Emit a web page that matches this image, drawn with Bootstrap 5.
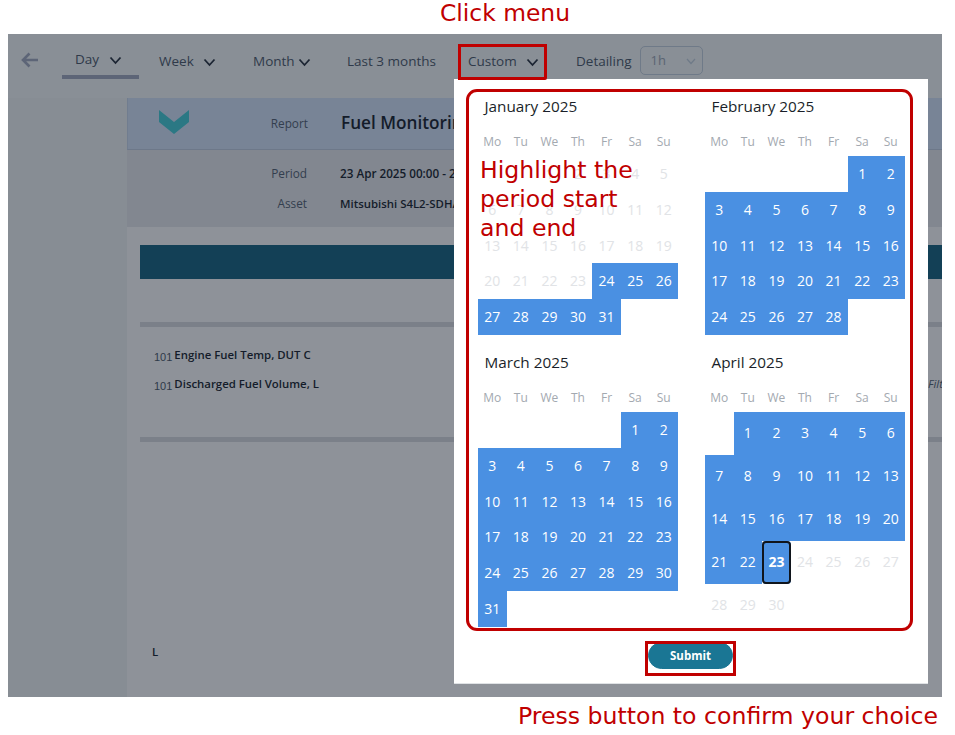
<!DOCTYPE html>
<html lang="en">
  <head>
    <meta charset="UTF-8" />
    <meta name="viewport" content="width=device-width, initial-scale=1.0" />
    <title>Custom period</title>
    <link href="https://cdn.jsdelivr.net/npm/bootstrap@5.3.0/dist/css/bootstrap.min.css" rel="stylesheet" />
    <style>
      body {
        font-family: "Open Sans", "Noto Sans", sans-serif;
        background: #fff;
        color: #1c2533;
        height: 735px;
        overflow: hidden;
      }
      .note {
        font-family: "DejaVu Sans", sans-serif;
        color: #c00000;
        line-height: 1;
      }
      .note-top { font-size: 23.4px; height: 34px; padding-top: 2px; text-align: center; padding-left: 55px; }
      .note-bottom { font-size: 23.6px; padding: 8px 17px 0 0; text-align: right; }
      .note-mid { position: absolute; left: 480px; top: 156px; font-size: 23.6px; line-height: 29px; width: 170px; }

      .screen {
        position: relative;
        margin: 0 13px 0 8px;
        height: 663px;
        background: #8e9299;
        overflow: hidden;
      }
      .topbar { height: 64px; background: #898f96; padding-left: 12px; font-size: 13.5px; color: #2f3a4a; }
      .back-arrow { width: 20px; height: 18px; margin-top: 17px; margin-right: 22px; }
      .tab { height: 44px; padding-top: 17px; white-space: nowrap; }
      .tab svg { width: 13px; height: 9px; }
      .chev-gap { margin-left: 6px; }
      .tab-day { width: 77px; padding: 15px 0 0 13px; border-bottom: 4px solid #5d6577; height: 45px; margin-right: 20px; }
      .tab-week { width: 94px; }
      .tab-month { width: 94px; }
      .tab-last { width: 121px; }
      .tab-custom { width: 108px; }
      .detail-lbl { margin-right: 8px; }
      .detail-sel {
        width: 63px; height: 29px; margin-top: 12px; padding: 4px 0 0 10px;
        border: 1px solid #6f7a88; border-radius: 5px; color: #5a6472; font-size: 13px;
      }
      .detail-sel svg { width: 10px; height: 7px; margin-left: 20px; }

      .rowpart { display: flex; flex: 1; }
      .left-gap { width: 119px; background: #878d94; flex-shrink: 0; }
      .report { flex: 1; min-width: 0; height: 599px; }
      .rep-head { height: 52px; background: #788496; border-bottom: 1px solid #6d7889; position: relative; border-left: 1px solid #717d8f; }
      .rep-logo { position: absolute; left: 31px; top: 12px; width: 30px; height: 24px; }
      .rep-key { position: absolute; left: 120px; width: 60px; text-align: right; font-size: 11.8px; color: #333e4e; }
      .rep-k1 { top: 17px; }
      .rep-k2 { top: 15px; }
      .rep-k3 { top: 45px; }
      .rep-title { position: absolute; left: 213px; top: 12px; font-size: 17.2px; font-weight: 600; color: #141c2a; white-space: nowrap; }
      .rep-meta { height: 77px; background: #828790; position: relative; }
      .rep-val { position: absolute; left: 213px; font-size: 11.7px; font-weight: 600; color: #141c2a; white-space: nowrap; }
      .rep-v2 { top: 15px; }
      .rep-v3 { top: 45px; font-size: 11.4px; }
      .teal-bar { height: 34px; background: #134056; margin: 18px 0 0 13px; }
      .rule { height: 5px; background: #7b8089; margin-left: 13px; }
      .rule-one { margin-top: 43px; }
      .rule-two { margin-top: 33px; }
      .signals { padding: 19px 0 0 27px; font-size: 11.4px; font-weight: 600; color: #141c2a; }
      .sig-line { height: 29px; white-space: nowrap; position: relative; }
      .sig-num { font-family: "Liberation Sans", sans-serif; font-weight: 400; font-size: 11px; color: #2f3a4a; margin-right: 2px; position: relative; top: 2px; }
      .sig-filt { position: absolute; left: 774px; top: 0; font-style: italic; font-weight: 400; color: #333e4e; }
      .foot-l { margin: 201px 0 0 25px; font-size: 11.4px; font-weight: 600; color: #141c2a; }

      .picker {
        position: absolute; left: 446px; top: 45px; width: 474px; height: 605px;
        background: #fff; border-bottom: 1px solid #dfe2e5;
      }
      .cal-frame {
        position: absolute; left: 12px; top: 10px; width: 447px; height: 542px;
        border: 3px solid #c00000; border-radius: 11px; pointer-events: none;
      }
      .months { display: grid; grid-template-columns: 200px 200px; column-gap: 27px; padding: 17px 0 0 24px; }
      .month-box { height: 256px; }
      .month-name { font-size: 15.3px; color: #1a1f29; line-height: 20px; padding-left: 6.5px; height: 26px; }
      .dow-row { display: grid; grid-template-columns: repeat(7, 1fr); text-align: center; font-size: 12px; color: #a3a9b0; height: 34px; align-items: center; padding-top: 5px; }
      .day-grid { display: grid; grid-template-columns: repeat(7, 1fr); text-align: center; font-size: 14px; }
      .day-grid > span { height: 35.800px; line-height: 35px; color: #e1e3e6; }
      .day-grid.tall > span { height: 43px; line-height: 42px; }
      .day-grid > span.on { background: #4a90e2; color: #fff; }
      .day-grid > span.today {
        background: #4a90e2; color: #fff; font-weight: 700;
        outline: 2px solid #10151c; outline-offset: -2px; border-radius: 4px;
      }
      .btn-submit {
        --bs-btn-bg: #1a7694; --bs-btn-color: #fff; --bs-btn-border-color: #1a7694;
        --bs-btn-hover-bg: #1a7694; --bs-btn-hover-color: #fff; --bs-btn-hover-border-color: #1a7694;
        width: 85px; height: 27px; padding: 0; font-size: 11.5px; font-weight: 700; line-height: 1; border-radius: 14px;
      }
      .submit-wrap { position: absolute; left: 194px; top: 563px; }
      .mark-box { position: absolute; border: 3px solid #c00000; }
      .mark-custom { left: 450px; top: 10px; width: 89px; height: 36px; border-radius: 0 0 2px 0; }
      .mark-submit { left: 645px; top: 641px; width: 91px; height: 35px; }
    </style>
  </head>
  <body>
    <div class="note note-top">Click menu</div>
    <div class="screen">
      <div class="topbar d-flex">
        <svg class="back-arrow" viewBox="0 0 20 18"><path d="M18 9H3M9.500 2.500 3 9l6.500 6.500" fill="none" stroke="#5d6577" stroke-width="2.600" /></svg>
        <div class="tab tab-day">Day <svg class="chev-gap" viewBox="0 0 13 9"><path d="M1.500 1.500 6.500 7l5-5.500" fill="none" stroke="#1c2533" stroke-width="1.800" /></svg></div>
        <div class="tab tab-week">Week <svg class="chev-gap" viewBox="0 0 13 9"><path d="M1.500 1.500 6.500 7l5-5.500" fill="none" stroke="#1c2533" stroke-width="1.800" /></svg></div>
        <div class="tab tab-month">Month <svg viewBox="0 0 13 9"><path d="M1.500 1.500 6.500 7l5-5.500" fill="none" stroke="#1c2533" stroke-width="1.800" /></svg></div>
        <div class="tab tab-last">Last 3 months</div>
        <div class="tab tab-custom">Custom <svg class="chev-gap" viewBox="0 0 13 9"><path d="M1.500 1.500 6.500 7l5-5.500" fill="none" stroke="#1c2533" stroke-width="1.800" /></svg></div>
        <div class="tab detail-lbl">Detailing</div>
        <div class="detail-sel">1h<svg viewBox="0 0 10 7"><path d="M1 1l4 4.500L9 1" fill="none" stroke="#6f7a88" stroke-width="1.200" /></svg></div>
      </div>
      <div class="rowpart">
        <div class="left-gap"></div>
        <div class="report">
          <div class="rep-head">
            <svg class="rep-logo" viewBox="0 0 30 24"><path d="M0 0 15 12 30 0V12L15 24 0 12Z" fill="#2b7884" /></svg>
            <span class="rep-key rep-k1">Report</span>
            <span class="rep-title">Fuel Monitoring</span>
          </div>
          <div class="rep-meta">
            <span class="rep-key rep-k2">Period</span>
            <span class="rep-val rep-v2">23 Apr 2025 00:00 - 23 Apr 2025 23:59</span>
            <span class="rep-key rep-k3">Asset</span>
            <span class="rep-val rep-v3">Mitsubishi S4L2-SDHA</span>
          </div>
          <div class="teal-bar"></div>
          <div class="rule rule-one"></div>
          <div class="signals">
            <div class="sig-line"><span class="sig-num">101</span>Engine Fuel Temp, DUT C</div>
            <div class="sig-line"><span class="sig-num">101</span>Discharged Fuel Volume, L<span class="sig-filt">Filt</span></div>
          </div>
          <div class="rule rule-two"></div>
          <div class="foot-l">L</div>
        </div>
      </div>

      <div class="picker">
        <div class="months" id="months"></div>
        <div class="cal-frame"></div>
        <div class="submit-wrap"><button type="button" class="btn btn-submit">Submit</button></div>
      </div>
      <div class="mark-box mark-custom"></div>
    </div>
    <div class="note note-bottom">Press button to confirm your choice</div>
    <div class="mark-box mark-submit"></div>
    <div class="note note-mid">Highlight the period start and end</div>

    <script src="https://cdn.jsdelivr.net/npm/bootstrap@5.3.0/dist/js/bootstrap.bundle.min.js"></script>
    <script>
      // offset = empty cells before the 1st, first/last = highlighted range
      let months = [
        { name: "January 2025", offset: 2, days: 31, first: 24, last: 31 },
        { name: "February 2025", offset: 5, days: 28, first: 1, last: 28 },
        { name: "March 2025", offset: 5, days: 31, first: 1, last: 31 },
        { name: "April 2025", offset: 1, days: 30, first: 1, last: 22, today: 23, tall: true },
      ];
      let dow = ["Mo", "Tu", "We", "Th", "Fr", "Sa", "Su"];
      let html = "";
      months.forEach((m) => {
        html += '<div class="month-box"><div class="month-name">' + m.name + "</div>";
        html += '<div class="dow-row">' + dow.map((d) => "<span>" + d + "</span>").join("") + "</div>";
        html += '<div class="day-grid' + (m.tall ? " tall" : "") + '">';
        for (let i = 0; i < m.offset; i++) html += "<span></span>";
        for (let d = 1; d <= m.days; d++) {
          let cls = d >= m.first && d <= m.last ? "on" : "";
          if (d === m.today) cls = "today";
          html += '<span class="' + cls + '">' + d + "</span>";
        }
        html += "</div></div>";
      });
      document.getElementById("months").innerHTML = html;
    </script>
  </body>
</html>
